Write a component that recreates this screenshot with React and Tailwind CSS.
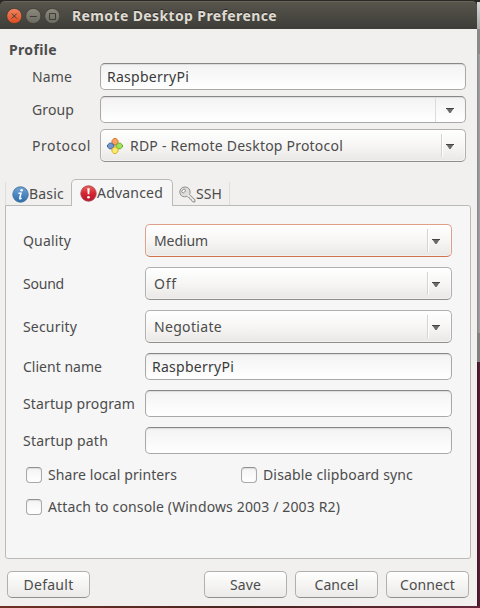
import React, { useLayoutEffect, useRef, useState } from "react";

// Text run whose tracking is adjusted so it occupies the given width.
function Label({ w, className = "", children }) {
  const ref = useRef(null);
  const [spacing, setSpacing] = useState(0);
  useLayoutEffect(() => {
    const natural = ref.current.getBoundingClientRect().width;
    setSpacing((w - natural) / children.length);
  }, []);
  return (
    <span ref={ref} className={`inline-block shrink-0 whitespace-pre ${className}`} style={{ letterSpacing: `${spacing}px` }}>
      {children}
    </span>
  );
}

function Arrow() {
  return (
    <svg width="8" height="5" viewBox="0 0 8 5" className="mt-[2px] block shrink-0">
      <path d="M0 0h8L4.6 5H3.4z" fill="#6a6a6a" />
      <path d="M0 .5h8" stroke="#444" />
    </svg>
  );
}

function Entry({ children }) {
  return (
    <div className="flex h-[27px] w-full items-center rounded-[5px] border border-[#aaa9a7] border-t-[#888785] bg-gradient-to-b from-[#f3f3f3] to-white pl-[6px] text-[#3a3a3a] shadow-[inset_0_1px_1px_#dcdcdc]">
      {children}
    </div>
  );
}

function Combo({ focused, children }) {
  const edge = focused
    ? "border-[#dfa089] border-b-[#ce7350]"
    : "border-[#b1b0ae] border-b-[#8f8e8c]";
  return (
    <div className={`flex h-[33px] w-full items-center rounded-[5px] border bg-gradient-to-b from-white via-[#f7f6f5] to-[#e9e8e6] pr-[11px] shadow-[inset_0_0_0_1px_rgba(255,255,255,0.4)] ${edge}`}>
      <div className="flex flex-1 items-center">{children}</div>
      <div className="mr-[3px] h-[23px] w-[2px] border-l border-[#d4d3d1] bg-white" />
      <Arrow />
    </div>
  );
}

function Row({ label, w, className = "", children }) {
  return (
    <div className={`flex items-center ${className}`}>
      <div className="flex w-[122px] shrink-0"><Label w={w}>{label}</Label></div>
      <div className="w-[307px]">{children}</div>
    </div>
  );
}

function Check({ w, children, className = "" }) {
  return (
    <div className={`flex h-4 items-center gap-[6px] ${className}`}>
      <div className="h-4 w-4 shrink-0 rounded-[4px] border border-[#aaa9a7] border-t-[#91908e] bg-gradient-to-b from-[#f4f4f4] to-white shadow-[inset_0_1px_1px_#dedede]" />
      <Label w={w}>{children}</Label>
    </div>
  );
}

function Button({ w, className = "", children }) {
  return (
    <div className={`flex h-[27px] w-[83px] items-center justify-center rounded-[5px] border border-[#b1b0ae] border-b-[#918f8d] bg-gradient-to-b from-white to-[#ebeae8] ${className}`}>
      <Label w={w}>{children}</Label>
    </div>
  );
}

function WindowButtons() {
  return (
    <svg width="54" height="16" viewBox="0 0 54 16" className="mt-px block shrink-0">
      <defs>
        <linearGradient id="close" x2="0" y2="1"><stop stopColor="#f48662" /><stop offset="1" stopColor="#dc4b1d" /></linearGradient>
        <linearGradient id="plain" x2="0" y2="1"><stop stopColor="#8c897e" /><stop offset="1" stopColor="#6c6a61" /></linearGradient>
      </defs>
      <g stroke="#3d3c36" strokeWidth=".8">
        <circle cx="8.3" cy="8" r="7.6" fill="url(#close)" />
        <circle cx="27.3" cy="8" r="7.6" fill="url(#plain)" />
        <circle cx="46.3" cy="8" r="7.6" fill="url(#plain)" />
      </g>
      <g fill="none" stroke="#3d3c36" strokeWidth="1">
        <path d="m5.8 5.5 5 5m0-5-5 5M23.8 8.5h7M43.5 5.5h6v6h-6z" />
      </g>
    </svg>
  );
}

function ProtocolIcon() {
  return (
    <svg width="16" height="16" viewBox="0 0 16 16" className="block shrink-0" strokeWidth=".9" strokeLinejoin="round">
      <path d="M6.8.5h2.4L11 2.7v2L8.8 7H7.2L5 4.7v-2z" fill="#f5a467" stroke="#d96716" />
      <path d="M2.6 5.2h2L7 7.2v1.6l-2.4 2h-2L.5 9V7z" fill="#7699cc" stroke="#2d5596" />
      <path d="M11.4 5.2h2L15.5 7v2l-2.1 1.8h-2L9 8.8V7.2z" fill="#a3e05c" stroke="#58a511" />
      <path d="M7.2 9h1.6L11 11.3v2l-1.8 2.2H6.8L5 13.3v-2z" fill="#fcea75" stroke="#d2aa0b" />
    </svg>
  );
}

function InfoIcon() {
  return (
    <svg width="17" height="17" viewBox="0 0 17 17" className="block shrink-0">
      <defs><linearGradient id="info" x2="0" y2="1"><stop stopColor="#72a5d6" /><stop offset="1" stopColor="#2c6dac" /></linearGradient></defs>
      <circle cx="8.5" cy="8.5" r="7.7" fill="url(#info)" stroke="#3b6f9f" strokeWidth=".9" />
      <circle cx="9.6" cy="4.3" r="1.3" fill="#fff" />
      <path d="M6.4 7.3h2.6L7.7 12.2q-.2.9.9.5l1-.5" fill="none" stroke="#fff" strokeWidth="1.5" />
    </svg>
  );
}

function AlertIcon() {
  return (
    <svg width="17" height="17" viewBox="0 0 17 17" className="block shrink-0">
      <defs><linearGradient id="alert" x2="0" y2="1"><stop stopColor="#e9655d" /><stop offset=".5" stopColor="#d42530" /><stop offset="1" stopColor="#b4172f" /></linearGradient></defs>
      <circle cx="8.5" cy="8.5" r="7.7" fill="url(#alert)" stroke="#a93f48" strokeWidth=".9" />
      <path d="M7.3 3.2h2.4l-.4 6H7.7z" fill="#fff" />
      <circle cx="8.5" cy="12.3" r="1.3" fill="#fff" />
    </svg>
  );
}

function KeyIcon() {
  return (
    <svg width="17" height="17" viewBox="0 0 17 17" className="block shrink-0" fill="#dededb" stroke="#868684" strokeWidth=".9">
      <path d="M6 1C2.8 1 .8 3.2.8 6s2 4.8 4.8 4.8c1 0 1.7-.2 2.3-.6l1.3 1.3 1.5-.2.1 1.8 1.7.1.2 1.7 1.1 1.1h2.1v-2.3l-5.4-5.3c.4-.7.6-1.4.6-2.3C11.1 3 9 1 6 1z" />
      <ellipse cx="4.6" cy="5" rx="2.1" ry="1.5" transform="rotate(-45 4.6 5)" fill="#f7f7f7" />
      <path d="m8.5 9 5.7 5.5" stroke="#fff" />
    </svg>
  );
}

export default function App() {
  return (
    <div className="flex h-[608px] w-[480px] flex-col overflow-hidden bg-[#2b2926] font-['Noto_Sans','Open_Sans',sans-serif] text-[14px] leading-[18px] text-[#4c4c4c]">
      <div className="flex h-[606px]">
        <div className="flex w-[477px] flex-col pt-px">
          <div className="flex h-7 shrink-0 items-center rounded-t-[5px] border-t border-[#68665c] bg-gradient-to-b from-[#57554c] to-[#3e3d38] pl-[6px]">
            <WindowButtons />
            <Label w={205} className="ml-[12px] text-[14px] font-bold text-[#dfdbd2] [text-shadow:0_-1px_0_#2b2a27]">Remote Desktop Preference</Label>
          </div>
          <div className="flex flex-1 flex-col bg-[#f1f0ee]">
            <div className="flex h-[34px] items-center pl-[9px] pt-[8px]"><Label w={48} className="font-bold">Profile</Label></div>

            <div className="flex w-[466px] flex-col gap-[6px] pl-8">
              <div className="flex items-center">
                <div className="flex w-[68px] shrink-0"><Label w={40}>Name</Label></div>
                <Entry><Label w={82}>RaspberryPi</Label></Entry>
              </div>
              <div className="flex items-center">
                <div className="flex w-[68px] shrink-0"><Label w={42}>Group</Label></div>
                <Entry>
                  <div className="ml-auto flex h-full items-center border-l border-[#dcdcdc] pl-[10px] pr-[11px]"><Arrow /></div>
                </Entry>
              </div>
              <div className="flex items-center">
                <div className="flex w-[68px] shrink-0"><Label w={59}>Protocol</Label></div>
                <Combo>
                  <div className="flex items-center gap-[7px] pl-[6px]"><ProtocolIcon /><Label w={213}>RDP - Remote Desktop Protocol</Label></div>
                </Combo>
              </div>
            </div>

            <div className="mt-[17px] flex h-[27px] items-end pl-[5px]">
              <div className="flex h-[24px] w-[66px] items-center border-l border-[#dedddb] pl-[6px]"><InfoIcon /><Label w={35}>Basic</Label></div>
              <div className="z-10 flex h-[27px] w-[102px] items-center rounded-t-[5px] border border-b-0 border-[#bbbab7] bg-[#f6f6f6] pl-[8px]"><AlertIcon /><Label w={66}>Advanced</Label></div>
              <div className="flex h-[24px] w-[57px] items-center border-r border-[#dedddb] pl-[6px]"><KeyIcon /><Label w={26}>SSH</Label></div>
            </div>
            <div className="-mt-px ml-[5px] flex h-[354px] w-[466px] flex-col rounded-b-[3px] rounded-tr-[3px] border border-[#bbbab7] bg-[#f6f6f6] pl-[17px] pt-[18px]">
              <div className="flex flex-col gap-[10px]">
                <Row label="Quality" w={48}><Combo focused><Label w={54} className="ml-2">Medium</Label></Combo></Row>
                <Row label="Sound" w={41}><Combo><Label w={23} className="ml-2">Off</Label></Combo></Row>
                <Row label="Security" w={54}><Combo><Label w={68} className="ml-2">Negotiate</Label></Combo></Row>
                <Row label="Client name" w={79}><Entry><Label w={82}>RaspberryPi</Label></Entry></Row>
                <Row label="Startup program" w={112}><Entry /></Row>
                <Row label="Startup path" w={85}><Entry /></Row>
              </div>
              <div className="mt-[13px] flex pl-[3px]">
                <Check w={129} className="w-[215px]">Share local printers</Check>
                <Check w={150}>Disable clipboard sync</Check>
              </div>
              <Check w={292} className="ml-[3px] mt-4">Attach to console (Windows 2003 / 2003 R2)</Check>
            </div>
            <div className="mt-3 flex gap-2 pl-[7px]">
              <Button w={50} className="mr-[106px]">Default</Button>
              <Button w={31}>Save</Button>
              <Button w={44}>Cancel</Button>
              <Button w={55}>Connect</Button>
            </div>
          </div>
        </div>
        <div className="flex w-[3px] flex-col pt-[2px]">
          <div className="h-[27px] bg-gradient-to-b from-[#d8d8d8] to-[#aaa]" />
          <div className="h-[25px] bg-[#8b8a88]" />
          <div className="h-[279px] bg-gradient-to-r from-[#858585] to-[#a5a5a8]" />
          <div className="h-[29px] bg-[#83817e]" />
          <div className="flex-1 bg-gradient-to-r from-[#421526] to-[#5a2037]" />
        </div>
      </div>
      <div className="h-[2px] bg-gradient-to-r from-[#703124] via-[#482620] to-[#65263a]" />
    </div>
  );
}
